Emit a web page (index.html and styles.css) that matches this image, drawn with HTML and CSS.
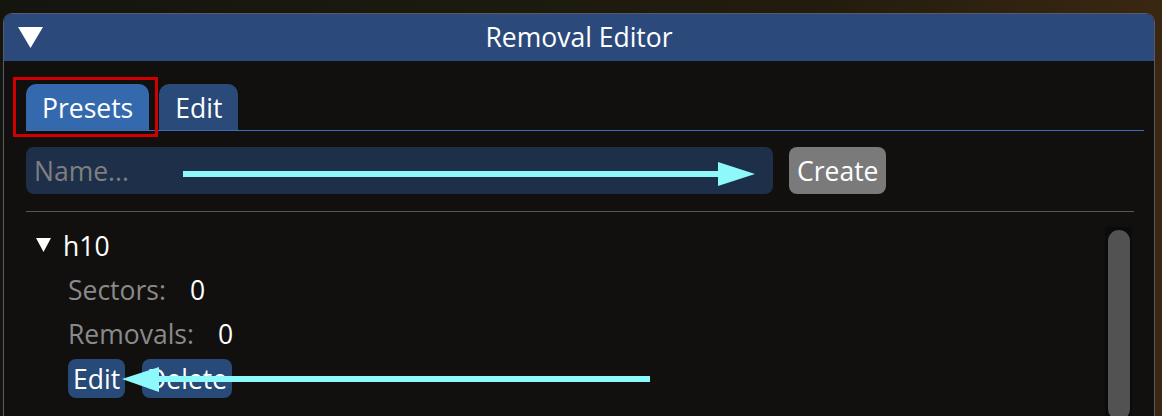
FILE: index.html
```html
<!DOCTYPE html>
<html>
<head>
<meta charset="utf-8">
<link rel="stylesheet" href="styles.css">
</head>
<body>
<div class="window">
  <div class="titlebar">
    <svg class="collapse" width="25" height="21" viewBox="0 0 25 21"><polygon points="0,0 25,0 12.5,21" fill="#fff"/></svg>
    <div class="title">Removal Editor</div>
    <div></div>
  </div>
  <div class="content">
    <div class="tabbar">
      <div class="tab active">Presets</div>
      <div class="tab">Edit</div>
    </div>
    <div class="inputrow">
      <div class="input">Name...</div>
      <div class="btn create">Create</div>
    </div>
    <div class="separator"></div>
    <div class="listarea">
      <div class="list">
        <div class="row node">
          <svg class="arrow-down" width="15" height="14" viewBox="0 0 15 14"><polygon points="0,0 15,0 7.5,14" fill="#fff"/></svg>
          <span>h10</span>
        </div>
        <div class="row child"><span class="label">Sectors:</span><span class="value">0</span></div>
        <div class="row child"><span class="label">Removals:</span><span class="value">0</span></div>
        <div class="buttons">
          <div class="btn small">Edit</div>
          <div class="btn small">Delete</div>
        </div>
      </div>
      <div class="scrolltrack"><div class="scrollgrab"></div></div>
    </div>
  </div>
</div>
<svg class="annotations" width="1162" height="416" viewBox="0 0 1162 416">
  <rect x="14.5" y="78.5" width="142" height="57" fill="none" stroke="#d00000" stroke-width="3"/>
  <rect x="183" y="171" width="538" height="6" fill="#8ef9fa"/>
  <polygon points="718,162 755,174 718,186" fill="#8ef9fa"/>
  <rect x="155" y="376" width="495" height="6" fill="#8ef9fa"/>
  <polygon points="159,367 122,379 159,392" fill="#8ef9fa"/>
</svg>
</body>
</html>
```
FILE: styles.css
```css
html, body {
  margin: 0;
  padding: 0;
}
body {
  width: 1162px;
  height: 416px;
  overflow: hidden;
  position: relative;
  background: linear-gradient(90deg, #14150f 0%, #1b1a0e 40%, #221c0e 70%, #3a2712 100%);
  font-family: "Open Sans", "Noto Sans", sans-serif;
  font-size: 26.5px;
  color: #fff;
}
.window {
  box-sizing: border-box;
  margin: 13px 0 0 3px;
  width: 1152px;
  height: 430px;
  border: 1px solid #5b5868;
  border-radius: 9px 9px 0 0;
  background: #11100f;
  overflow: hidden;
}
.titlebar {
  height: 47px;
  background: #2b4a7b;
  display: grid;
  grid-template-columns: 1fr auto 1fr;
  align-items: center;
  padding-left: 14px;
  box-sizing: border-box;
}
.collapse {
  display: block;
}
.title {
  line-height: 1;
  position: relative;
  left: -7px;
}
.content {
  padding: 0 10px 0 22px;
}
.tabbar {
  margin-top: 23px;
  display: flex;
  gap: 10px;
  border-bottom: 1px solid #3a6cba;
  height: 46px;
}
.tab {
  box-sizing: border-box;
  background: #2a4a7a;
  border-radius: 10px 10px 0 0;
  padding: 2px 16px 0;
  display: flex;
  align-items: center;
  line-height: 1;
  height: 46px;
}
.tab.active {
  background: #3469ad;
}
.inputrow {
  margin-top: 16px;
  display: flex;
  gap: 16px;
  height: 47px;
}
.input {
  width: 747px;
  box-sizing: border-box;
  background: #1e2f4a;
  border-radius: 8px;
  color: #7f7f7f;
  padding: 2px 0 0 8px;
  display: flex;
  align-items: center;
  line-height: 1;
}
.btn {
  box-sizing: border-box;
  display: flex;
  align-items: center;
  line-height: 1;
  border-radius: 8px;
}
.create {
  background: #7a7a7a;
  padding: 2px 8px 0;
}
.separator {
  margin-top: 17px;
  width: 1108px;
  height: 1px;
  background: #57535f;
}
.listarea {
  display: flex;
}
.list {
  flex: 1;
  padding-top: 12px;
}
.row {
  height: 44px;
  display: flex;
  align-items: center;
  line-height: 1;
}
.node {
  padding-left: 10px;
}
.arrow-down {
  display: block;
  margin-right: 12px;
  position: relative;
  top: -1px;
}
.child {
  padding-left: 42px;
}
.label {
  color: #8a8a8a;
}
.value {
  margin-left: 24px;
}
.buttons {
  margin-top: 3px;
  padding-left: 42px;
  display: flex;
  gap: 17px;
}
.small {
  height: 39px;
  background: #284a78;
  padding: 1px 5px 0;
}
.scrolltrack {
  margin-top: 15px;
  margin-right: 12px;
  width: 27px;
  height: 200px;
  background: #0b0b0b;
  box-sizing: border-box;
  padding: 3px 2px 0 3px;
}
.scrollgrab {
  width: 22px;
  height: 190px;
  border-radius: 11px;
  background: #525252;
}
.annotations {
  position: absolute;
  left: 0;
  top: 0;
}
```
